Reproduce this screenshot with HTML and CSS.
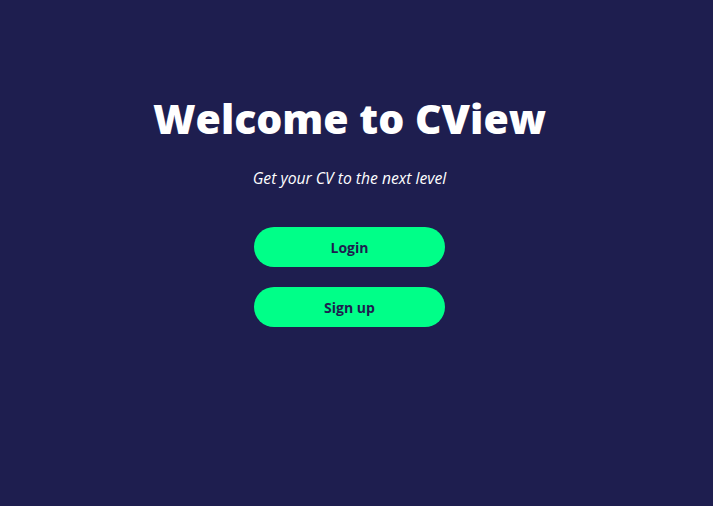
FILE: index.html
```html
<!DOCTYPE html>
<html>
<head>
<meta charset="utf-8">
<link rel="stylesheet" href="styles.css">
</head>
<body>
<main class="page">
  <h1 class="title">Welcome to CView</h1>
  <p class="subtitle">Get your CV to the next level</p>
  <div class="actions">
    <button class="btn">Login</button>
    <button class="btn">Sign up</button>
  </div>
</main>
</body>
</html>
```
FILE: styles.css
```css
html, body {
  margin: 0;
  height: 100%;
  background: #1e1e4f;
}
body {
  font-family: "Open Sans", sans-serif;
  color: #ffffff;
}
.page {
  box-sizing: border-box;
  width: 699px;
  display: flex;
  flex-direction: column;
  align-items: center;
  padding-top: 90px;
}
.title {
  margin: 0;
  font-size: 41px;
  font-weight: 800;
  line-height: 56px;
}
.subtitle {
  margin: 21px 0 0;
  font-size: 15.7px;
  font-style: italic;
  line-height: 22px;
}
.actions {
  margin-top: 38px;
  display: flex;
  flex-direction: column;
  gap: 20px;
}
.btn {
  width: 191px;
  height: 40px;
  border: none;
  border-radius: 20px;
  background: #00ff88;
  color: #1e1e4f;
  font-family: "Open Sans", sans-serif;
  font-size: 14px;
  font-weight: 700;
  padding: 0;
}
```
